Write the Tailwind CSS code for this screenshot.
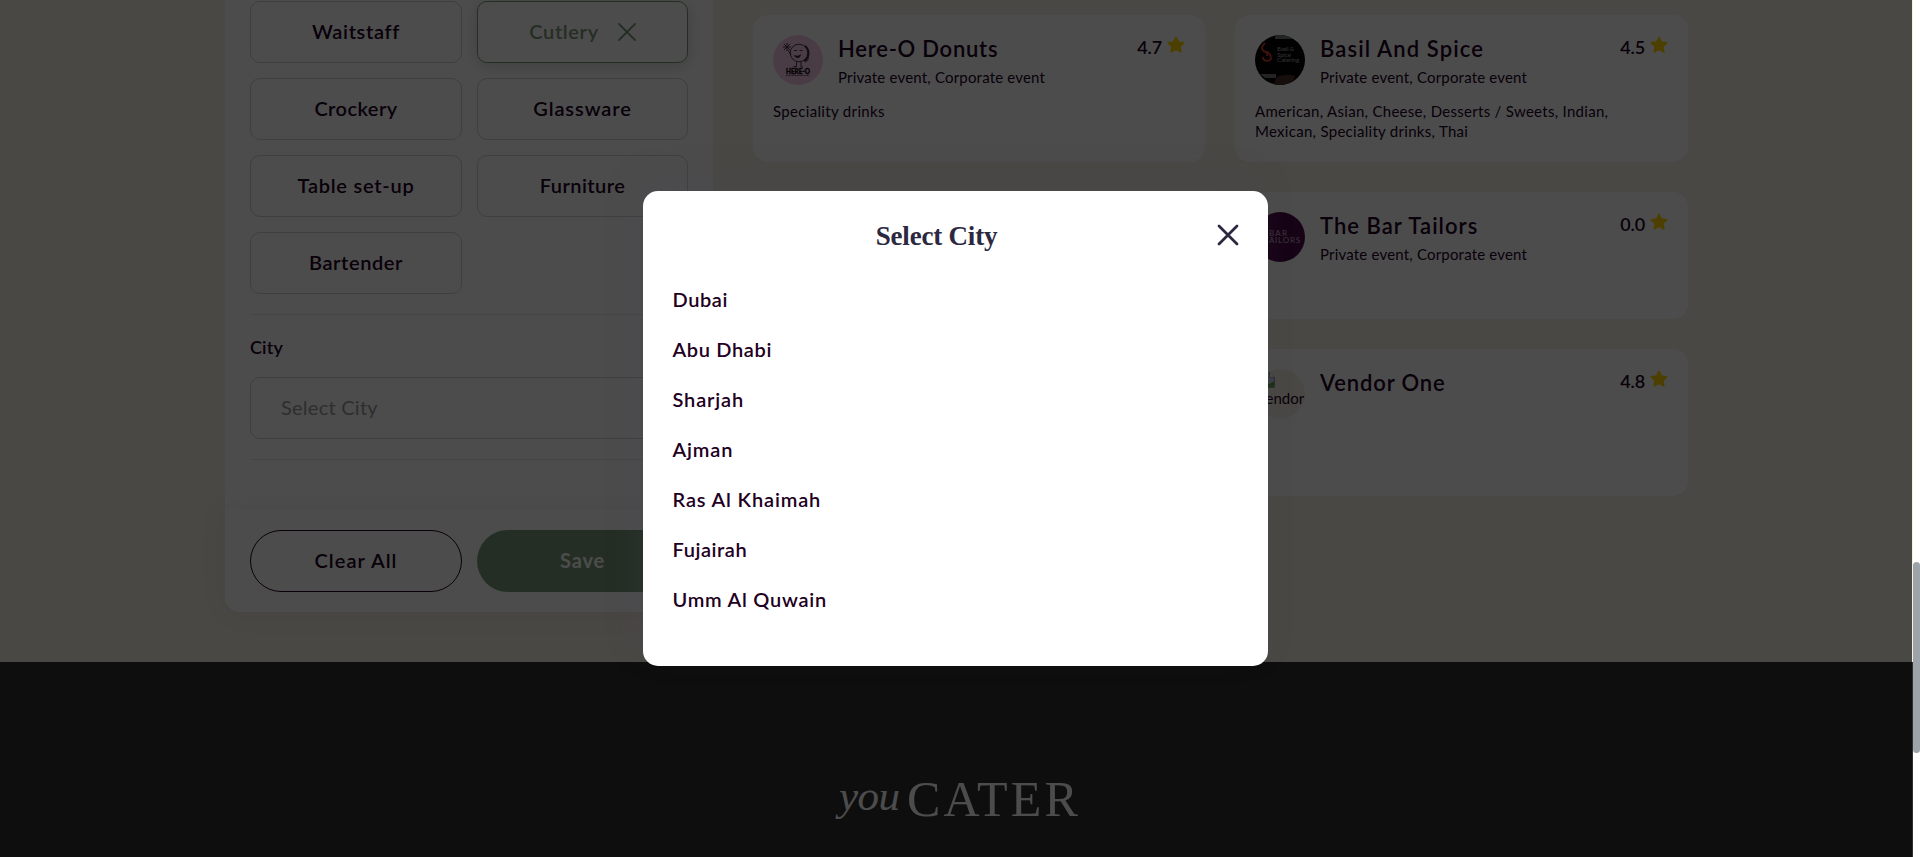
<!DOCTYPE html>
<html lang="en">
<head>
<meta charset="utf-8">
<title>youCATER</title>
<script src="https://cdn.jsdelivr.net/npm/@tailwindcss/browser@4"></script>
</head>
<body class="h-[857px] w-[1920px] overflow-hidden bg-white font-['Lato',sans-serif] text-[#22001f]">
<svg class="hidden"><symbol id="star" viewBox="0 0 17 17"><path d="M8.500 1.200l2.200 4.500 5 .7-3.600 3.400.9 5.200-4.500-2.500L4 15l.9-5.200L1.300 6.400l5-.7z" fill="#ffd400" stroke="#ffd400" stroke-width="1.600" stroke-linejoin="round"/></symbol></svg>
<div class="flex h-full">
<div class="h-full w-[1913px] shrink-0">
  <main class="flex h-[662px] items-start gap-10 bg-[#f6f0e3] pl-[225px]">
    <aside class="flex h-[612px] w-[488px] shrink-0 flex-col rounded-b-[15px] bg-white pt-px">
      <div class="mx-[25px] grid grid-cols-[212px_211px] gap-[15px] text-center text-xl font-semibold">
        <div class="flex h-[62px] items-center justify-center rounded-[10px] border border-[#d2d2d2] pb-[3px]"><span class="tracking-[0.650px]">Waitstaff</span></div>
        <div class="flex h-[62px] items-center justify-center gap-[19px] rounded-[10px] border border-[#7a9b79] pb-[3px] text-[#7a9b79] shadow-[0_3px_15px_rgba(0,0,0,0.16)]"><span class="tracking-[0.650px]">Cutlery</span><svg class="mt-[2px] size-[18px]" viewBox="0 0 18 18" fill="none" stroke="#7a9b79" stroke-width="1.800" stroke-linecap="round"><path d="M1 1l16 16M17 1L1 17"/></svg></div>
        <div class="flex h-[62px] items-center justify-center rounded-[10px] border border-[#d2d2d2] pb-[3px]"><span class="tracking-[0.450px]">Crockery</span></div>
        <div class="flex h-[62px] items-center justify-center rounded-[10px] border border-[#d2d2d2] pb-[3px]"><span class="tracking-[0.900px]">Glassware</span></div>
        <div class="flex h-[62px] items-center justify-center rounded-[10px] border border-[#d2d2d2] pb-[3px]"><span class="tracking-[0.750px]">Table set-up</span></div>
        <div class="flex h-[62px] items-center justify-center rounded-[10px] border border-[#d2d2d2] pb-[3px]"><span class="tracking-[0.450px]">Furniture</span></div>
        <div class="flex h-[62px] items-center justify-center rounded-[10px] border border-[#d2d2d2] pb-[3px]"><span class="tracking-[0.600px]">Bartender</span></div>
      </div>
      <div class="mx-[25px] mt-5 h-[146px] border-y border-[#e6e6e6] pt-5">
        <div class="text-lg leading-[25px] font-semibold"><span class="tracking-[0.150px]">City</span></div>
        <div class="mt-[17px] flex h-[62px] items-center rounded-[10px] border border-[#d2d2d2] pb-[3px] pl-[30px] text-xl text-[#9b9b9b]"><span class="tracking-[0.250px]">Select City</span></div>
      </div>
      <div class="mt-auto flex h-[103px] shrink-0 gap-[15px] rounded-b-[15px] bg-white px-[25px] pt-[21px] text-xl font-semibold shadow-[0_0_30px_rgba(0,0,0,0.06)]">
        <div class="flex h-[62px] w-[212px] items-center justify-center rounded-full border border-[#22001f] pb-[3px]"><span class="tracking-[1.050px]">Clear All</span></div>
        <div class="flex h-[62px] w-[211px] items-center justify-center rounded-full bg-[#7a9b79] pb-[3px] font-bold text-white"><span class="tracking-[0.800px]">Save</span></div>
      </div>
    </aside>

    <section class="mt-[15px] grid grid-cols-[452px_453px] grid-rows-[147px_127px_147px] gap-x-[30px] gap-y-[30px]">
      <article class="rounded-[15px] bg-white p-5">
        <div class="flex">
          <svg class="size-[50px] rounded-full" viewBox="0 0 50 50"><rect width="50" height="50" fill="#f8c8e8"/><g fill="none" stroke="#3a2a36" stroke-width=".9"><circle cx="26" cy="18" r="8.800"/><path d="M32 11a9 9 0 0 1-1 15" stroke-width="1.800"/><path d="M21 15.500h3M26.500 15.500h3M18 20l-3-5M35 20v5l-3 2M23.500 27v4.500h-3M28 27v4.500l2 .5M11 9l6 6M11 15l6-6M10 12h8M14 8v8"/></g><path d="M21 20c3 1 5 1 7-1 0 5-6 5-7 1z" fill="#3a2a36"/><text x="13" y="38.500" font-family="Lato" font-weight="900" font-size="7" textLength="24" lengthAdjust="spacingAndGlyphs" fill="#1a1018" stroke="#1a1018" stroke-width=".4">HERE-O</text><path d="M13 40.500h24" stroke="#5a4a56" stroke-dasharray="1 .5"/></svg>
          <div class="ml-[15px] flex-1"><h3 class="text-[22px] leading-[27px] font-semibold tracking-[0.750px]">Here-O Donuts</h3><p class="mt-[5px] text-[15px] leading-5 tracking-[0.190px]">Private event, Corporate event</p></div>
          <div class="flex h-6 items-center gap-[5px] text-lg font-semibold"><span class="tracking-[-0.100px]">4.7</span><svg class="mt-[-4px] size-[18px]"><use href="#star"/></svg></div>
        </div>
        <p class="mt-[14px] text-[15px] leading-5 tracking-[0.330px]">Speciality drinks</p>
      </article>
      <article class="rounded-[15px] bg-white p-5">
        <div class="flex">
          <svg class="size-[50px] rounded-full" viewBox="0 0 50 50"><rect width="50" height="50" fill="#050505"/><path d="M20 0h17v4H20z" fill="#71807e"/><path d="M5 39l16 0v4H10z" fill="#777"/><path d="M22 42q10-4 18-1l-3 9H18z" fill="#4a3027"/><path d="M10 8c-5 5-3 8 1 9 4 1 5 3 5 6 0 4-8 4-8-1M12 16v5" fill="none" stroke="#c53a26" stroke-width="2"/><g font-family="Lato" font-size="6" fill="#a8a8a8"><text x="22" y="16" textLength="17">Basil &amp;</text><text x="22" y="21.500" textLength="14">Spice</text><text x="22" y="27.300" textLength="22">Catering</text></g></svg>
          <div class="ml-[15px] flex-1"><h3 class="text-[22px] leading-[27px] font-semibold tracking-[1.120px]">Basil And Spice</h3><p class="mt-[5px] text-[15px] leading-5 tracking-[0.190px]">Private event, Corporate event</p></div>
          <div class="flex h-6 items-center gap-[5px] text-lg font-semibold"><span class="tracking-[-0.100px]">4.5</span><svg class="mt-[-4px] size-[18px]"><use href="#star"/></svg></div>
        </div>
        <p class="mt-[14px] text-[15px] leading-5 whitespace-nowrap"><span class="tracking-[0.290px]">American, Asian, Cheese, Desserts / Sweets, Indian,</span><br><span class="tracking-[0.290px]">Mexican, Speciality drinks, Thai</span></p>
      </article>
      <article class="rounded-[15px] bg-white"></article>
      <article class="rounded-[15px] bg-white p-5">
        <div class="flex">
          <svg class="size-[50px] rounded-full" viewBox="0 0 50 50"><rect width="50" height="50" fill="#4c0d4b"/><g font-family="Lato" font-size="8" fill="#c9aac6"><text x="14" y="23.500" textLength="18">BAR</text><text x="9" y="31" textLength="36">TAILORS</text></g></svg>
          <div class="ml-[15px] flex-1"><h3 class="text-[22px] leading-[27px] font-semibold tracking-[1.030px]">The Bar Tailors</h3><p class="mt-[5px] text-[15px] leading-5 tracking-[0.190px]">Private event, Corporate event</p></div>
          <div class="flex h-6 items-center gap-[5px] text-lg font-semibold"><span class="tracking-[-0.100px]">0.0</span><svg class="mt-[-4px] size-[18px]"><use href="#star"/></svg></div>
        </div>
      </article>
      <article class="rounded-[15px] bg-white"></article>
      <article class="rounded-[15px] bg-white p-5">
        <div class="flex">
          <div class="flex size-[50px] flex-col overflow-hidden rounded-full bg-[#f6f0e6] text-[15px] leading-5">
            <svg class="mt-[3px] ml-1 size-4 shrink-0" viewBox="0 0 16 16"><path d="M.5.500h10l5 5v10H.5z" fill="#c7d8f0" stroke="#999"/><path d="M10.500.500v5h5" fill="#fff" stroke="#999"/><path d="M1 15l5-6 4 3 5-3v6z" fill="#5aa34a"/></svg>
            <span class="ml-[3px]">vendor</span>
          </div>
          <div class="ml-[15px] flex-1"><h3 class="text-[22px] leading-[27px] font-semibold tracking-[0.850px]">Vendor One</h3></div>
          <div class="flex h-6 items-center gap-[5px] text-lg font-semibold"><span class="tracking-[-0.100px]">4.8</span><svg class="mt-[-4px] size-[18px]"><use href="#star"/></svg></div>
        </div>
      </article>
    </section>
  </main>
  <footer class="flex h-[195px] items-start bg-[#303030] pt-[112px] pl-[839px] font-['Liberation_Serif',serif] leading-none text-white">
    <span class="w-[68px] text-[43px] tracking-[-0.500px] italic">you</span><span class="text-[50px] tracking-[3.100px]">CATER</span>
  </footer>
</div>
<div class="h-full w-[7px] pt-[562px]"><div class="h-[191px] rounded-full bg-[#9ca3a9]"></div></div>
</div>

<div class="absolute inset-y-0 left-0 w-[1912px] bg-black/70"></div>
<div role="dialog" class="absolute top-[191px] left-[643px] h-[475px] w-[625px] rounded-[15px] bg-white px-[29px] pt-[28px] shadow-[-6px_-14px_36px_-6px_rgba(75,72,90,0.250)]">
  <div class="flex h-8 items-center">
    <h2 class="flex-1 pt-px pr-[16px] text-center font-['Liberation_Serif',serif] text-[27px] leading-8 font-bold tracking-[-0.200px] text-[#2b2840]">Select City</h2>
    <svg class="size-[22px]" viewBox="0 0 22 22" fill="none" stroke="#2b2840" stroke-width="2.800" stroke-linecap="round"><path d="M2 2l18 18M20 2L2 20"/></svg>
  </div>
  <ul class="mt-[23px] ml-[0.500px] text-xl leading-[50px] font-semibold">
    <li class="tracking-[0.600px]">Dubai</li>
    <li class="tracking-[0.650px]">Abu Dhabi</li>
    <li class="tracking-[0.850px]">Sharjah</li>
    <li class="tracking-[0.850px]">Ajman</li>
    <li class="tracking-[0.850px]">Ras Al Khaimah</li>
    <li class="tracking-[0.550px]">Fujairah</li>
    <li class="tracking-[0.750px]">Umm Al Quwain</li>
  </ul>
</div>
</body>
</html>
